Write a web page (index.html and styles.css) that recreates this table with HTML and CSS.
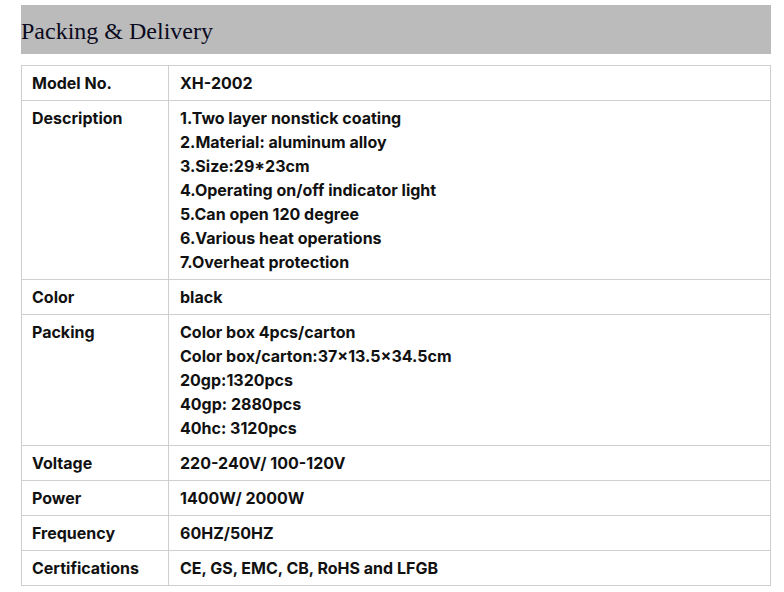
FILE: index.html
```html
<!DOCTYPE html>
<html>
<head>
<meta charset="utf-8">
<link rel="stylesheet" href="styles.css">
</head>
<body>
<div class="page">
  <h2 class="title">Packing &amp; Delivery</h2>
  <table class="spec">
    <tr><td class="k">Model No.</td><td class="v">XH-2002</td></tr>
    <tr><td class="k">Description</td><td class="v">1.Two layer nonstick coating<br>2.Material: aluminum alloy<br>3.Size:29*23cm<br>4.Operating on/off indicator light<br>5.Can open 120 degree<br>6.Various heat operations<br>7.Overheat protection</td></tr>
    <tr><td class="k">Color</td><td class="v">black</td></tr>
    <tr><td class="k">Packing</td><td class="v">Color box 4pcs/carton<br>Color box/carton:37×13.5×34.5cm<br>20gp:1320pcs<br>40gp: 2880pcs<br>40hc: 3120pcs</td></tr>
    <tr><td class="k">Voltage</td><td class="v">220-240V/ 100-120V</td></tr>
    <tr><td class="k">Power</td><td class="v">1400W/ 2000W</td></tr>
    <tr><td class="k">Frequency</td><td class="v">60HZ/50HZ</td></tr>
    <tr><td class="k">Certifications</td><td class="v">CE, GS, EMC, CB, RoHS and LFGB</td></tr>
  </table>
</div>
</body>
</html>
```
FILE: styles.css
```css
html, body { margin: 0; padding: 0; background: #fff; }
.page { padding: 5px 13px 0 21px; width: 750px; }
.title {
  margin: 0;
  background: #bbbbbb;
  height: 49px;
  line-height: 52px;
  font-family: "Liberation Serif", "Times New Roman", serif;
  font-weight: normal;
  font-size: 24px;
  color: #0a0a1e;
  padding-left: 0;
}
.spec {
  margin-top: 11px;
  width: 750px;
  border-collapse: collapse;
  font-family: Inter, "Noto Sans", sans-serif;
  font-weight: 700;
  font-size: 16px;
  line-height: 24px;
  color: #111;
}
.spec td {
  border: 1px solid #cfcfcf;
  padding: 5px 10px;
  vertical-align: top;
}
.spec td.k { width: 126px; }
.spec td.v { padding-left: 11px; }
```
